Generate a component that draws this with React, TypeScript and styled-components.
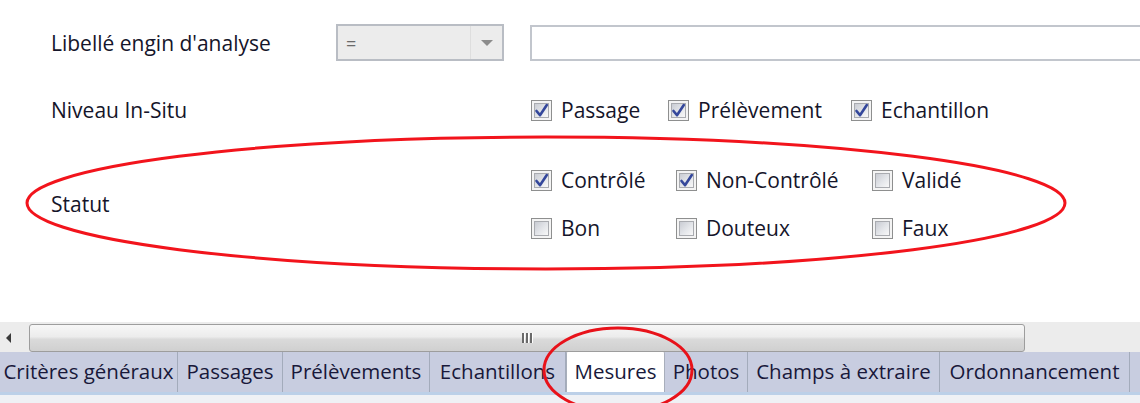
import React from "react";
import styled, { createGlobalStyle } from "styled-components";

const Global = createGlobalStyle`
  html, body { margin: 0; padding: 0; background: #ffffff; }
  body { font-family: "Open Sans", "Noto Sans", sans-serif; }
`;

const Page = styled.div`
  position: relative;
  width: 1140px;
  height: 403px;
  overflow: hidden;
  background: #ffffff;
  display: flex;
  flex-direction: column;
`;

const Form = styled.div`
  display: flex;
  flex-direction: column;
  padding: 24px 0 0 51px;
`;

const FieldRow = styled.div<{ $top: number; $h: number }>`
  display: flex;
  align-items: center;
  margin-top: ${(p) => p.$top}px;
  height: ${(p) => p.$h}px;
`;

const Label = styled.div<{ $w: number }>`
  width: ${(p) => p.$w}px;
  flex-shrink: 0;
  font-size: 21px;
  color: #15152a;
  white-space: nowrap;
`;

const Combo = styled.div`
  width: 168px;
  height: 37px;
  box-sizing: border-box;
  flex-shrink: 0;
  border: 2px solid #b9bdc4;
  background: #ececec;
  display: flex;
  align-items: stretch;
`;

const ComboValue = styled.div`
  flex: 1;
  display: flex;
  align-items: center;
  padding-left: 8px;
  font-size: 18px;
  color: #6a6a6a;
`;

const ComboButton = styled.div`
  width: 31px;
  border-left: 1px solid #dedede;
  display: flex;
  align-items: center;
  justify-content: center;
`;

const Arrow = styled.div`
  width: 0;
  height: 0;
  border-left: 6px solid transparent;
  border-right: 6px solid transparent;
  border-top: 6px solid #8c8c8c;
`;

const TextInput = styled.div`
  margin-left: 26px;
  flex-shrink: 0;
  width: 640px;
  height: 36px;
  box-sizing: border-box;
  border: 2px solid #c2c6cd;
  background: #ffffff;
`;

const Group = styled.div<{ $cols: string }>`
  display: grid;
  grid-template-columns: ${(p) => p.$cols};
  grid-auto-rows: 24px;
  row-gap: 24px;
`;

const Item = styled.label`
  display: flex;
  align-items: center;
  gap: 9px;
  font-size: 21px;
  color: #15152a;
  white-space: nowrap;
`;

const Box = styled.span`
  width: 21px;
  height: 21px;
  box-sizing: border-box;
  border: 1px solid #8e8f8f;
  padding: 2px;
  background: #f4f4f4;
  display: flex;
  flex-shrink: 0;
`;

const BoxFill = styled.span`
  flex: 1;
  background: linear-gradient(135deg, #c9ccd3 0%, #e4e6ea 55%, #f8f8f8 100%);
  border: 1px solid #a9abb0;
  position: relative;
`;

const Check = styled.svg`
  position: absolute;
  left: -3px;
  top: -3px;
  width: 19px;
  height: 19px;
`;

const Checkbox = ({ label, checked }: { label: string; checked?: boolean }) => (
  <Item>
    <Box>
      <BoxFill>
        {checked && (
          <Check viewBox="0 0 19 19">
            <path d="M4.5 10 L8 14.2 L14.8 4" fill="none" stroke="#34479b" strokeWidth="2.6" strokeLinecap="round" strokeLinejoin="round" />
          </Check>
        )}
      </BoxFill>
    </Box>
    {label}
  </Item>
);

const Scrollbar = styled.div`
  margin-top: 82px;
  height: 30px;
  background: #ececec;
  display: flex;
  align-items: stretch;
  padding: 2px 0 0 0;
  box-sizing: border-box;
`;

const ScrollArrow = styled.div`
  width: 29px;
  display: flex;
  align-items: center;
  justify-content: center;
  padding-right: 12px;
  box-sizing: border-box;
`;

const LeftTriangle = styled.div`
  width: 0;
  height: 0;
  border-top: 5px solid transparent;
  border-bottom: 5px solid transparent;
  border-right: 5px solid #3a3a3a;
`;

const Thumb = styled.div`
  width: 996px;
  box-sizing: border-box;
  border: 1px solid #9d9d9d;
  border-radius: 3px;
  background: linear-gradient(#f7f7f7 0%, #ececec 45%, #dadada 55%, #d0d0d0 100%);
  display: flex;
  align-items: center;
  justify-content: center;
`;

const Grip = styled.div`
  display: flex;
  gap: 2px;
  span {
    width: 2px;
    height: 10px;
    background: #6a6a6a;
    box-shadow: 1px 0 0 #ffffff;
  }
`;

const TabBar = styled.div`
  height: 40px;
  background: #c8cde0;
  display: flex;
  align-items: stretch;
  overflow: hidden;
`;

const Tab = styled.div<{ $w: number; $active?: boolean }>`
  width: ${(p) => p.$w}px;
  flex-shrink: 0;
  box-sizing: border-box;
  display: flex;
  align-items: center;
  justify-content: center;
  font-size: 20.5px;
  color: #18183a;
  white-space: nowrap;
  border-right: 1px solid ${(p) => (p.$active ? "#a8aebb" : "#a3abbb")};
  background: ${(p) => (p.$active ? "#ffffff" : "transparent")};
  margin-top: ${(p) => (p.$active ? "-1px" : "0")};
  border-left: ${(p) => (p.$active ? "1px solid #a8aebb" : "none")};
  border-radius: ${(p) => (p.$active ? "3px 3px 0 0" : "0")};
  padding-bottom: 2px;
`;

const TabUnderline = styled.div`
  height: 3px;
  background: #bcd0e8;
`;

const Footer = styled.div`
  flex: 1;
  background: #eff1f5;
`;

const Overlay = styled.svg`
  position: absolute;
  left: 0;
  top: 0;
  width: 1140px;
  height: 403px;
  pointer-events: none;
`;

const tabs: { label: string; w: number; active?: boolean }[] = [
  { label: "Critères généraux", w: 178 },
  { label: "Passages", w: 105 },
  { label: "Prélèvements", w: 147 },
  { label: "Echantillons", w: 136 },
  { label: "Mesures", w: 99, active: true },
  { label: "Photos", w: 83 },
  { label: "Champs à extraire", w: 192 },
  { label: "Ordonnancement", w: 190 },
  { label: "", w: 60 },
];

export default function App() {
  return (
    <Page>
      <Global />
      <Form>
        <FieldRow $top={0} $h={37}>
          <Label $w={285}>Libellé engin d'analyse</Label>
          <Combo>
            <ComboValue>=</ComboValue>
            <ComboButton>
              <Arrow />
            </ComboButton>
          </Combo>
          <TextInput />
        </FieldRow>
        <FieldRow $top={37} $h={24}>
          <Label $w={480}>Niveau In-Situ</Label>
          <Group $cols="137px 183px auto">
            <Checkbox label="Passage" checked />
            <Checkbox label="Prélèvement" checked />
            <Checkbox label="Echantillon" checked />
          </Group>
        </FieldRow>
        <FieldRow $top={46} $h={72}>
          <Label $w={480}>Statut</Label>
          <Group $cols="145px 196px auto">
            <Checkbox label="Contrôlé" checked />
            <Checkbox label="Non-Contrôlé" checked />
            <Checkbox label="Validé" />
            <Checkbox label="Bon" />
            <Checkbox label="Douteux" />
            <Checkbox label="Faux" />
          </Group>
        </FieldRow>
      </Form>
      <Scrollbar>
        <ScrollArrow>
          <LeftTriangle />
        </ScrollArrow>
        <Thumb>
          <Grip>
            <span />
            <span />
            <span />
          </Grip>
        </Thumb>
      </Scrollbar>
      <TabBar>
        {tabs.map((t, i) => (
          <Tab key={i} $w={t.w} $active={t.active}>
            {t.label}
          </Tab>
        ))}
      </TabBar>
      <TabUnderline />
      <Footer />
      <Overlay viewBox="0 0 1140 403">
        <ellipse cx="546" cy="203" rx="519" ry="66" fill="none" stroke="#f2141c" strokeWidth="3" />
        <ellipse cx="618" cy="370" rx="74" ry="42" fill="none" stroke="#e8121a" strokeWidth="3" />
      </Overlay>
    </Page>
  );
}
